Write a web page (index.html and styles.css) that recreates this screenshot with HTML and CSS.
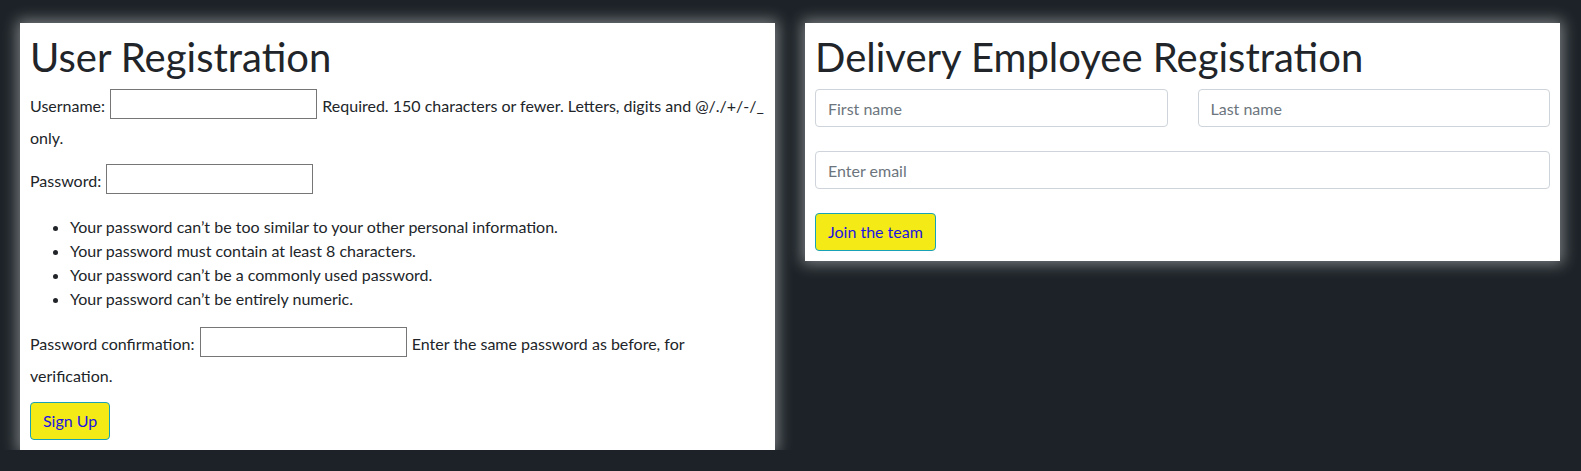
FILE: index.html
```html
<!DOCTYPE html>
<html lang="en">
<head>
<meta charset="utf-8">
<title>Registration</title>
<link rel="stylesheet" href="styles.css">
</head>
<body>
<div class="page">
  <section class="card">
    <h1 class="title">User Registration</h1>
    <form class="plain-form">
      <p class="field field-wrap"><label for="id_username">Username:</label> <input class="plain-input" type="text" id="id_username"> <span class="helptext">Required. 150 characters or fewer. Letters, digits and @/./+/-/_ only.</span></p>
      <p class="field"><label for="id_password1">Password:</label> <input class="plain-input" type="password" id="id_password1"></p>
      <ul class="rules">
        <li>Your password can’t be too similar to your other personal information.</li>
        <li>Your password must contain at least 8 characters.</li>
        <li>Your password can’t be a commonly used password.</li>
        <li>Your password can’t be entirely numeric.</li>
      </ul>
      <p class="field field-wrap"><label for="id_password2">Password confirmation:</label> <input class="plain-input" type="password" id="id_password2"> <span class="helptext">Enter the same password as before, for verification.</span></p>
      <button type="button" class="btn">Sign Up</button>
    </form>
  </section>
  <section class="card">
    <h1 class="title">Delivery Employee Registration</h1>
    <form class="bs-form">
      <div class="row">
        <input class="form-control" type="text" placeholder="First name">
        <input class="form-control" type="text" placeholder="Last name">
      </div>
      <div class="group">
        <input class="form-control" type="email" placeholder="Enter email">
      </div>
      <button type="button" class="btn">Join the team</button>
    </form>
  </section>
</div>
</body>
</html>
```
FILE: styles.css
```css
html, body {
  margin: 0;
  padding: 0;
  background: #1c2227;
}
body {
  font-family: "Lato", "Liberation Sans", sans-serif;
  font-size: 16px;
  line-height: 1.5;
  color: #212529;
}
.page {
  display: flex;
  align-items: flex-start;
  gap: 30px;
  padding: 23px 21px 0 20px;
}
.card {
  box-sizing: border-box;
  width: 755px;
  flex: 0 0 755px;
  background: #fff;
  padding: 10px;
  box-shadow: 0 0 14px 3px rgba(225, 228, 230, 0.48);
}
.title {
  margin: 0 0 8px;
  font-size: 40px;
  font-weight: 400;
  line-height: 1.2;
  color: #212529;
}
.plain-form .field {
  margin: 0 0 16px;
  line-height: 28px;
}
.plain-form .field-wrap {
  margin-bottom: 10px;
  line-height: 32px;
}
.plain-input {
  box-sizing: border-box;
  width: 207px;
  height: 30px;
  margin: 0 1px;
  padding: 3px 2px 0;
  border: 1px solid #767676;
  border-radius: 0;
  font: inherit;
  line-height: normal;
  background: #fff;
}
.rules {
  margin: 20px 0 16px;
  padding-left: 40px;
  line-height: 24px;
}
.btn {
  display: inline-block;
  box-sizing: border-box;
  height: 38px;
  padding: 6px 12px;
  border: 1px solid #17a2b8;
  border-radius: 4px;
  background: #f4ea15;
  color: #1c14e0;
  font: inherit;
  line-height: 24px;
  cursor: pointer;
}
.bs-form .row {
  display: flex;
  gap: 30px;
  margin-bottom: 24px;
}
.bs-form .group {
  margin-bottom: 24px;
}
.form-control {
  box-sizing: border-box;
  display: block;
  width: 100%;
  min-width: 0;
  height: 38px;
  padding: 6px 12px;
  border: 1px solid #ced4da;
  border-radius: 4px;
  font: inherit;
  line-height: 24px;
  color: #495057;
  background: #fff;
}
.row .form-control {
  flex: 1 1 0;
}
.form-control::placeholder {
  color: #6c757d;
  opacity: 1;
}
```
